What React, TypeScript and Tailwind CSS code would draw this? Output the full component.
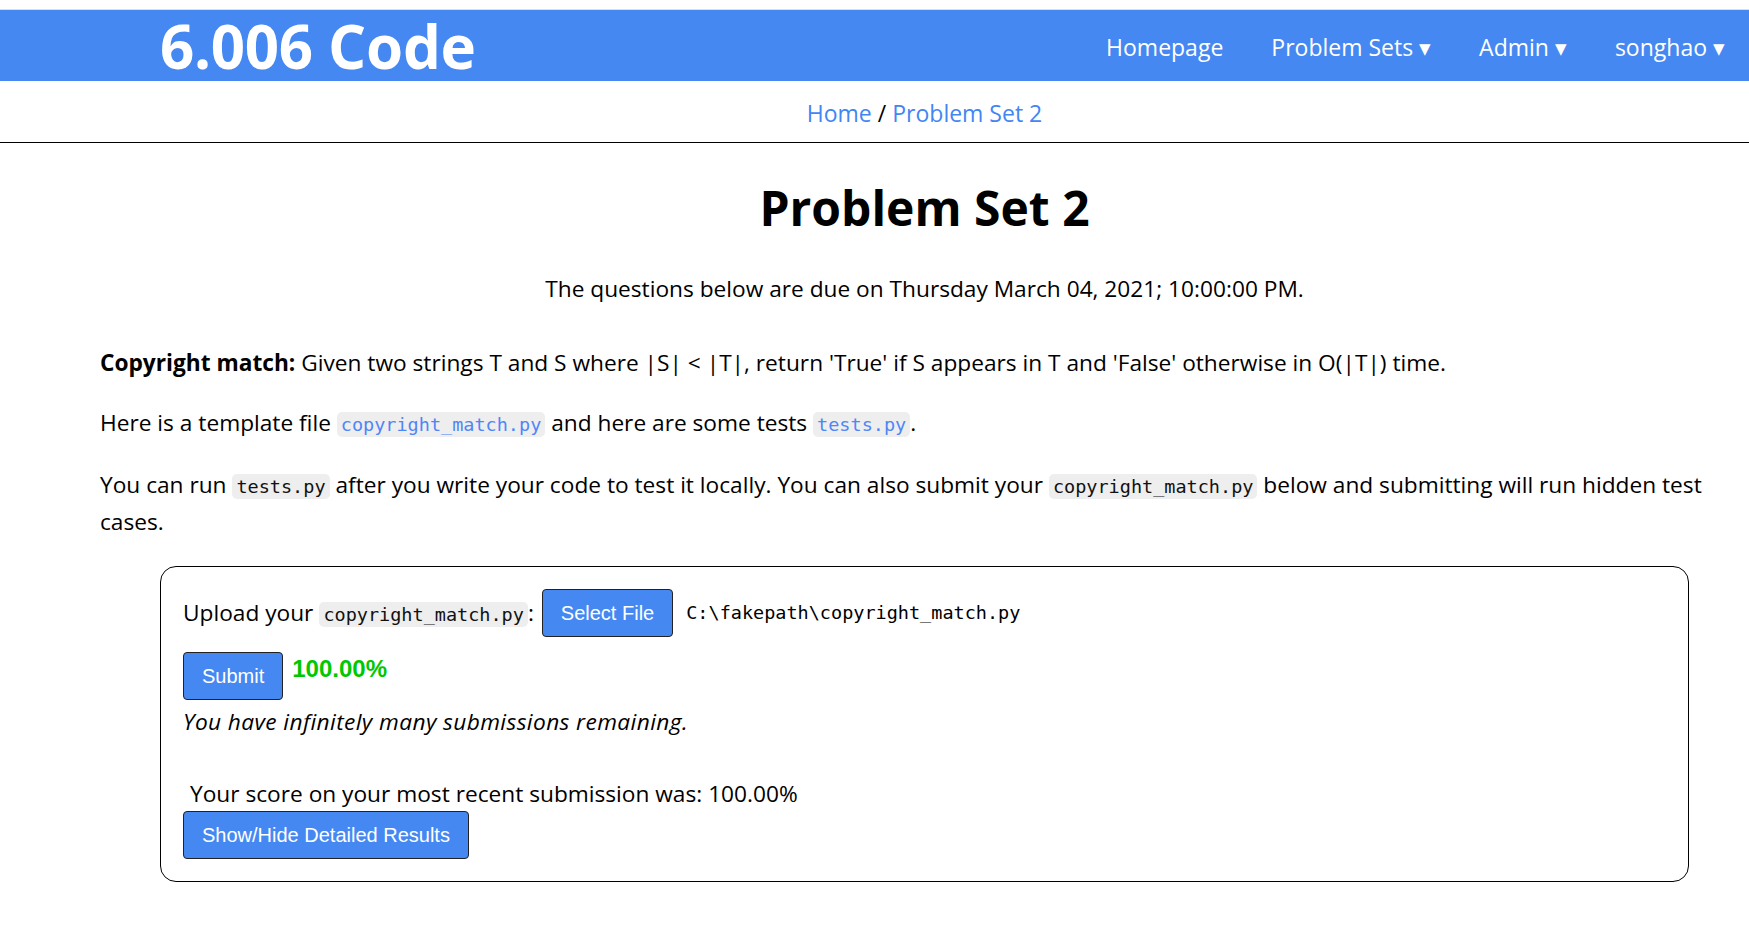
import React from 'react'

const sans = { fontFamily: "'Open Sans', 'Noto Sans', sans-serif" }

function Code({ children, link = false }: { children: React.ReactNode; link?: boolean }) {
  return (
    <code
      className={`rounded-[5px] bg-[#eeeeee] px-[4px] py-[2px] text-[18.5px] ${link ? 'text-[#4f86f7]' : 'text-[#111]'}`}
      style={{ fontFamily: "'DejaVu Sans Mono', monospace" }}
    >
      {children}
    </code>
  )
}

function BlueButton({ children }: { children: React.ReactNode }) {
  return (
    <button
      className="h-[48px] rounded-[4px] border border-[#222] bg-[#4588f2] px-[18px] text-[20px] text-white"
      style={{ fontFamily: "'Liberation Sans', Arial, sans-serif" }}
    >
      {children}
    </button>
  )
}

export default function App() {
  const navLinks = ['Homepage', 'Problem Sets ▾', 'Admin ▾', 'songhao ▾']

  return (
    <div className="min-h-screen bg-white text-black" style={sans}>
      <div className="h-[10px] border-b border-[#dddddd]" />

      <nav className="flex h-[71px] items-center justify-between bg-[#4588f2]">
        <div className="pl-[160px] text-[60px] font-bold leading-none text-white tracking-[-0.3px]">6.006 Code</div>
        <div className="flex items-center pt-[4px]">
          {navLinks.map((l) => (
            <a key={l} className="px-[24px] text-[23px] text-white">
              {l}
            </a>
          ))}
        </div>
      </nav>

      <div className="flex h-[62px] items-center justify-center border-b border-black pl-[100px] pt-[3px] text-[23px]">
        <a className="text-[#4285f4]">Home</a>
        <span className="px-[6px]">/</span>
        <a className="text-[#4285f4]">Problem Set 2</a>
      </div>

      <main className="pl-[100px]">
        <h1 className="mt-[29px] text-center text-[48px] font-bold">Problem Set 2</h1>

        <p className="mt-[28px] text-center text-[22.7px]">
          The questions below are due on Thursday March 04, 2021; 10:00:00 PM.
        </p>

        <div className="mt-[39px] flex flex-col gap-[25px] text-[22.7px] leading-[35px]">
          <p>
            <b>Copyright match:</b> Given two strings T and S where |S|&nbsp;&lt;&nbsp;|T|, return 'True' if S appears in T
            and 'False' otherwise in O(|T|) time.
          </p>
          <p>
            Here is a template file <Code link>copyright_match.py</Code> and here are some tests{' '}
            <Code link>tests.py</Code>.
          </p>
          <p>
            You can run <Code>tests.py</Code> after you write your code to test it locally. You can also submit your{' '}
            <Code>copyright_match.py</Code> below and submitting will run hidden test cases.
          </p>
        </div>

        <div className="mx-[60px] mt-[27px] rounded-[16px] border-[1.5px] border-black px-[22px] pb-[22px] pt-[22px] text-[22.7px]">
          <div className="flex items-center">
            <span>Upload your</span>
            <span className="ml-[6px]">
              <Code>copyright_match.py</Code>
            </span>
            <span>:</span>
            <span className="ml-[8px]">
              <BlueButton>Select File</BlueButton>
            </span>
            <span className="ml-[13px] text-[18.5px]" style={{ fontFamily: "'DejaVu Sans Mono', monospace" }}>
              C:\fakepath\copyright_match.py
            </span>
          </div>

          <div className="mt-[15px] flex items-start">
            <BlueButton>Submit</BlueButton>
            <span
              className="ml-[9px] mt-[-1px] text-[24px] font-bold text-[#00c800]"
              style={{ fontFamily: "'Liberation Sans', Arial, sans-serif" }}
            >
              100.00%
            </span>
          </div>

          <p className="mt-[4px] italic leading-[35px] tracking-[0.4px]">You have infinitely many submissions remaining.</p>

          <p className="mt-[37px] pl-[7px] leading-[35px]">Your score on your most recent submission was: 100.00%</p>
          <BlueButton>Show/Hide Detailed Results</BlueButton>
        </div>
      </main>
    </div>
  )
}
